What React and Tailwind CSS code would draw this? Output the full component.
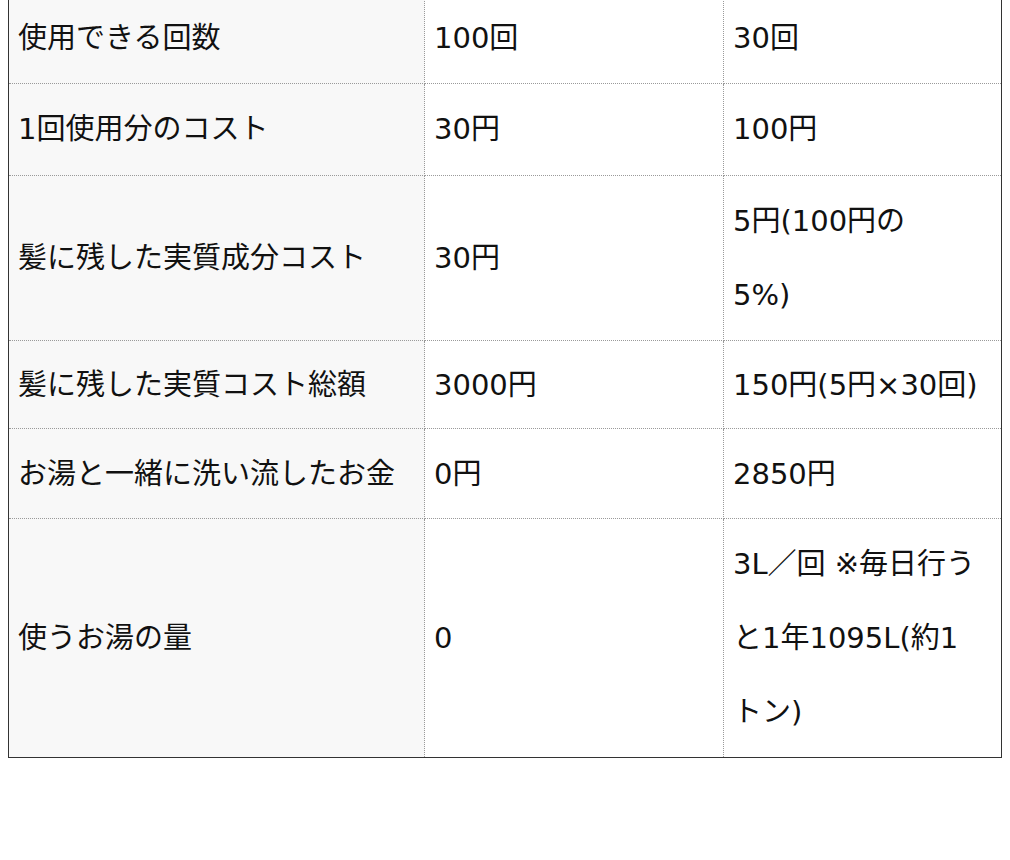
import React from 'react';

const rows = [
  { label: '使用できる回数', a: '100回', b: ['30回'], pad: 'pt-[8px] pb-[8px]' },
  { label: '1回使用分のコスト', a: '30円', b: ['100円'], pad: 'pt-[8px] pb-[9px]' },
  { label: '髪に残した実質成分コスト', a: '30円', b: ['5円(100円の', '5%)'], pad: 'pt-[8px] pb-[8px]' },
  { label: '髪に残した実質コスト総額', a: '3000円', b: ['150円(5円×30回)'], pad: 'pt-[7px] pb-[6px]' },
  { label: 'お湯と一緒に洗い流したお金', a: '0円', b: ['2850円'], pad: 'pt-[8px] pb-[7px]' },
  { label: '使うお湯の量', a: '0', b: ['3L／回 ※毎日行う', 'と1年1095L(約1', 'トン)'], pad: 'pt-[8px] pb-[8px]' },
];

const cell = 'border border-dotted border-[#9a9a9a] px-[9px] align-middle leading-[74px]';

export default function App() {
  return (
    <div className="min-h-screen bg-white pb-[100px]" style={{ fontFamily: '"DejaVu Sans", "Noto Sans CJK JP", sans-serif' }}>
      <table className="-mt-[8px] ml-2 w-[993px] table-fixed border-collapse border border-solid border-[#333] text-[29px] text-[#111]">
        <colgroup>
          <col className="w-[416px]" />
          <col className="w-[299px]" />
          <col className="w-[278px]" />
        </colgroup>
        <tbody>
          {rows.map((row) => (
            <tr key={row.label}>
              <td className={`${cell} ${row.pad} bg-[#f8f8f8] whitespace-nowrap`}>{row.label}</td>
              <td className={`${cell} ${row.pad} bg-white`}>{row.a}</td>
              <td className={`${cell} ${row.pad} bg-white whitespace-nowrap`}>
                {row.b.map((line, i) => (
                  <React.Fragment key={i}>
                    {i > 0 && <br />}
                    {line}
                  </React.Fragment>
                ))}
              </td>
            </tr>
          ))}
        </tbody>
      </table>
    </div>
  );
}
